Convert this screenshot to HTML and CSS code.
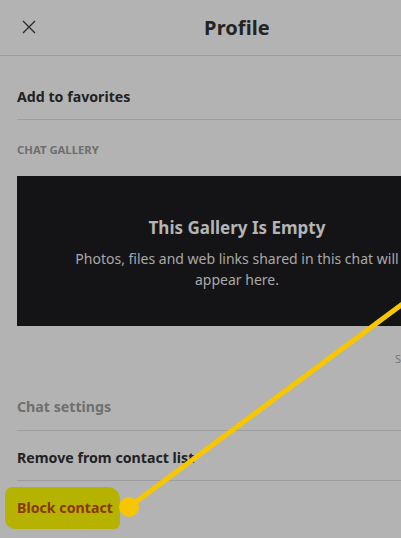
FILE: index.html
```html
<!DOCTYPE html>
<html lang="en">
<head>
    <meta charset="UTF-8">
    <meta name="viewport" content="width=device-width, initial-scale=1.0">
    <title>Profile</title>
    <link rel="stylesheet" href="styles.css">
</head>
<body>
    <div class="panel">
        <div class="header">
            <button class="close-btn" type="button" aria-label="Close">
                <svg width="16" height="16" viewBox="0 0 16 16">
                    <path d="M2 2 L14 14 M14 2 L2 14" stroke="#2a2a2a" stroke-width="1.3" fill="none"/>
                </svg>
            </button>
            <h1>Profile</h1>
        </div>

        <div class="list">
            <div class="row">Add to favorites</div>
        </div>

        <div class="section">
            <div class="section-title">CHAT GALLERY</div>
            <div class="gallery">
                <h2>This Gallery Is Empty</h2>
                <p>Photos, files and web links shared in this chat will<br>appear here.</p>
            </div>
            <div class="gallery-more">S</div>
        </div>

        <div class="list bottom">
            <div class="row muted">Chat settings</div>
            <div class="row">Remove from contact list</div>
            <div class="row danger">
                <span class="mark"></span>
                <span class="label">Block contact</span>
            </div>
        </div>
    </div>

    <!-- annotation pointer -->
    <svg class="pointer" width="401" height="538" viewBox="0 0 401 538">
        <line x1="129" y1="507" x2="420" y2="291" stroke="#f6c700" stroke-width="5" stroke-linecap="round"/>
        <circle cx="129" cy="507" r="10" fill="#f6c700"/>
    </svg>
</body>
</html>
```

FILE: styles.css
```css
body {
    font-family: "Noto Sans", "Open Sans", sans-serif;
    background-color: #b3b3b3;
    color: #202020;
    margin: 0;
    padding: 0;
    width: 401px;
    height: 538px;
    overflow: hidden;
    position: relative;
}

.panel {
    width: 474px;
}

.header {
    height: 56px;
    border-bottom: 1px solid #9d9d9d;
    display: flex;
    align-items: center;
    box-sizing: border-box;
}

.close-btn {
    background: none;
    border: none;
    padding: 0;
    margin-left: 21px;
    margin-top: -2px;
    width: 16px;
    height: 16px;
    display: flex;
}

.header h1 {
    flex: 1;
    text-align: center;
    margin: 0 0 0 -37px;
    font-size: 20px;
    font-weight: 700;
    color: #232323;
    letter-spacing: 0.1px;
}

.list {
    margin-top: 14px;
    margin-left: 17px;
}

.row {
    height: 50px;
    display: flex;
    align-items: center;
    padding-top: 3px;
    border-top: 1px solid #9d9d9d;
    box-sizing: border-box;
    font-size: 14.2px;
    font-weight: 700;
    color: #222;
}

.list .row:first-child {
    border-top: none;
}

.list .row:last-child {
    border-bottom: 1px solid #9d9d9d;
}

.list.bottom {
    margin-top: 0;
}

.list.bottom .row:last-child {
    border-bottom: none;
}

.row.muted {
    color: #6f6f6f;
}

.row.danger {
    position: relative;
}

.row.danger .label {
    position: relative;
    color: #8a3700;
}

.mark {
    position: absolute;
    left: -12px;
    top: 6px;
    width: 115px;
    height: 42px;
    background: #b6b300;
    border-radius: 8px 12px 6px 10px;
}

.section {
    padding: 0 17px;
}

.section-title {
    padding-top: 23px;
    line-height: 14px;
    font-size: 11.3px;
    font-weight: 700;
    color: #6e6e6e;
    margin-bottom: 19px;
}

.gallery {
    background: #141416;
    height: 150px;
    box-sizing: border-box;
    text-align: center;
    padding-top: 41px;
}

.gallery h2 {
    margin: 0;
    font-size: 17px;
    font-weight: 700;
    color: #b5b5b5;
    line-height: 22px;
}

.gallery p {
    margin: 9px 0 0;
    font-size: 14px;
    line-height: 21px;
    color: #a9a9a9;
}

.gallery-more {
    padding-top: 26px;
    padding-left: 378px;
    line-height: 14px;
    height: 54px;
    box-sizing: border-box;
    font-size: 11px;
    color: #777;
}

.pointer {
    position: absolute;
    left: 0;
    top: 0;
    pointer-events: none;
}
```
